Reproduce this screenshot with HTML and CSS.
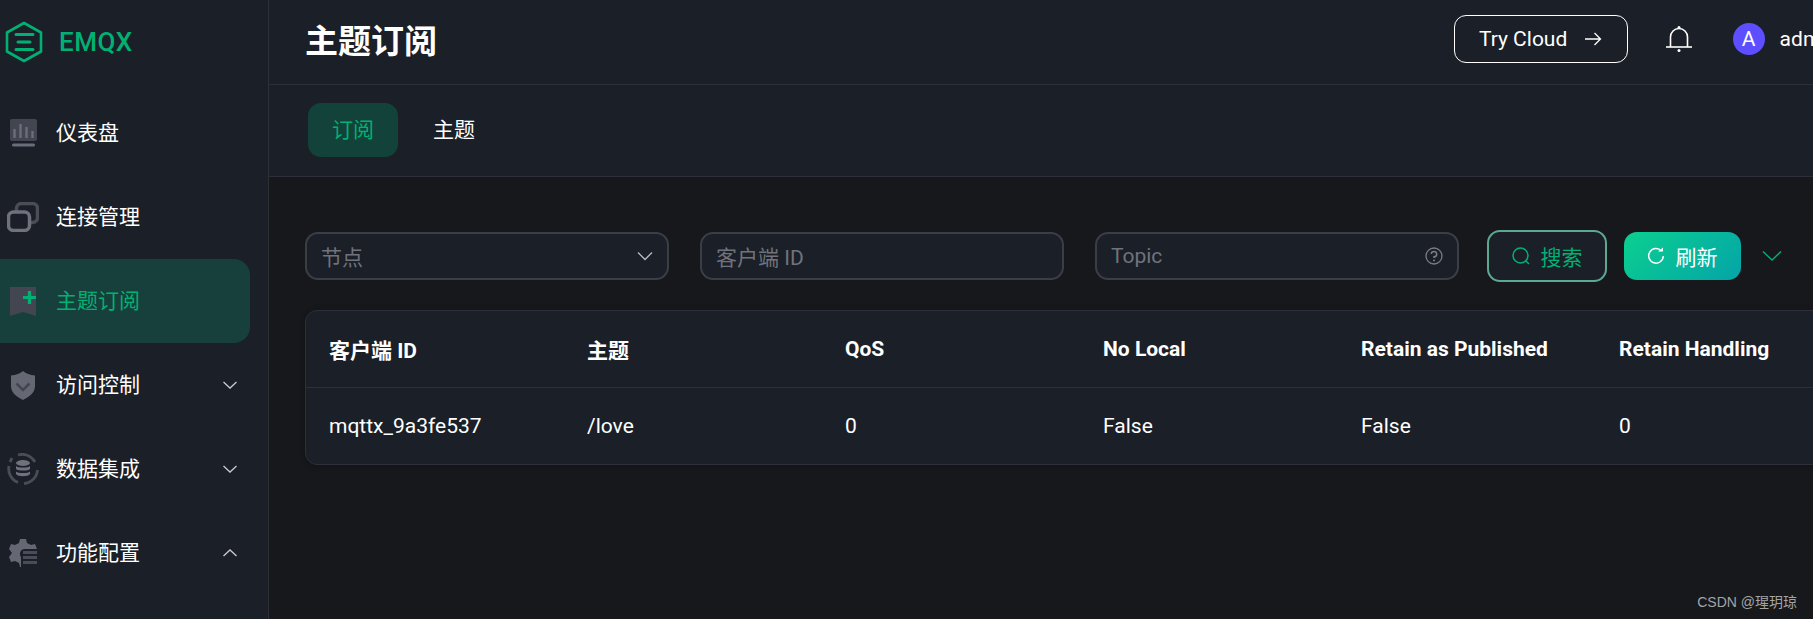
FILE: index.html
```html
<!DOCTYPE html>
<html lang="zh-CN">
<head>
    <meta charset="UTF-8">
    <title>EMQX 主题订阅</title>
    <link rel="stylesheet" href="styles.css">
</head>
<body>
    <!-- 侧边栏 -->
    <aside class="sidebar">
        <div class="logo">
            <svg class="logo-mark" viewBox="0 0 38 42" width="38" height="42">
                <path d="M19 2 L36 11.5 V30.5 L19 40 L2 30.5 V11.5 Z" fill="none" stroke="#00b173" stroke-width="2.6" stroke-linejoin="round"/>
                <path d="M11 13.5 H28 M13 21 H25 M11 28.5 H28" fill="none" stroke="#00b173" stroke-width="3" stroke-linecap="round"/>
            </svg>
            <span class="logo-text">EMQX</span>
        </div>
        <nav class="menu">
            <div class="menu-item">
                <span class="icon-box">
                    <svg viewBox="0 0 27 28" width="27" height="28">
                        <rect x="0" y="0" width="27" height="22" rx="2" fill="#434651"/>
                        <path d="M4.500 10 V19 M10.500 5 V19 M16.500 8 V19 M22.500 12 V19" stroke="#6b6e78" stroke-width="2.400" fill="none"/>
                        <rect x="2" y="24.500" width="23" height="3" rx="1.500" fill="#6b6e78"/>
                    </svg>
                </span>
                <span class="menu-label">仪表盘</span>
            </div>
            <div class="menu-item">
                <span class="icon-box">
                    <svg viewBox="0 0 32 30" width="32" height="30">
                        <rect x="9.500" y="1.500" width="21" height="19" rx="5" fill="none" stroke="#4a4d58" stroke-width="3.500"/>
                        <rect x="1.500" y="10" width="21" height="18.500" rx="5" fill="#1b1f28" stroke="#6f727c" stroke-width="3.500"/>
                    </svg>
                </span>
                <span class="menu-label">连接管理</span>
            </div>
            <div class="menu-item active">
                <span class="icon-box">
                    <svg viewBox="0 0 26 29" width="26" height="29">
                        <path d="M0 0 H26 V29 L13 25 L0 29 Z" fill="#434651"/>
                        <path d="M19.500 4 V17 M13 10.500 H26" stroke="#00b173" stroke-width="3.200" fill="none"/>
                    </svg>
                </span>
                <span class="menu-label">主题订阅</span>
            </div>
            <div class="menu-item">
                <span class="icon-box">
                    <svg viewBox="0 0 24 29" width="24" height="29">
                        <path d="M12 0 C15 2.500 19 4 24 4.500 V15 C24 22 18 26 12 29 C6 26 0 22 0 15 V4.500 C5 4 9 2.500 12 0 Z" fill="#656873"/>
                        <path d="M5.500 12.500 L12 19 L18.500 12.500" stroke="#434651" stroke-width="2.600" fill="none"/>
                    </svg>
                </span>
                <span class="menu-label">访问控制</span>
                <svg class="menu-arrow" viewBox="0 0 16 10" width="16" height="10"><path d="M1.500 2 L8 8 L14.500 2" fill="none" stroke="#c9cad0" stroke-width="1.300"/></svg>
            </div>
            <div class="menu-item">
                <span class="icon-box">
                    <svg viewBox="0 0 32 32" width="32" height="32">
                        <path d="M11 2 A14.500 14.500 0 0 1 28 9 M30.500 17 A14.500 14.500 0 0 1 17 30.500 M11 29.500 A14.500 14.500 0 0 1 2 13 M3 9 L5 5" fill="none" stroke="#4a4d58" stroke-width="2.800"/>
                        <ellipse cx="16" cy="10" rx="7" ry="3" fill="#6f727c"/>
                        <path d="M9 13 C11 15 21 15 23 13 V16 C21 18 11 18 9 16 Z M9 18.500 C11 20.500 21 20.500 23 18.500 V21 C21 24 11 24 9 21 Z" fill="#6f727c"/>
                    </svg>
                </span>
                <span class="menu-label">数据集成</span>
                <svg class="menu-arrow" viewBox="0 0 16 10" width="16" height="10"><path d="M1.500 2 L8 8 L14.500 2" fill="none" stroke="#c9cad0" stroke-width="1.300"/></svg>
            </div>
            <div class="menu-item">
                <span class="icon-box">
                    <svg viewBox="0 0 28 28" width="28" height="28">
                        <path d="M11 0 H17 L18 4 L22 6 L26 5 L28 10 H15 A5 5 0 0 0 12 18 V28 H11 L10 24 L6 22 L2 23 L0 18 L3 14 L0 10 L2 5 L6 6 L10 4 Z" fill="#656873"/>
                        <path d="M14 13.500 H28 M14 18.500 H28 M14 23.500 H28" stroke="#4a4d58" stroke-width="3" fill="none"/>
                    </svg>
                </span>
                <span class="menu-label">功能配置</span>
                <svg class="menu-arrow" viewBox="0 0 16 10" width="16" height="10"><path d="M1.500 8 L8 2 L14.500 8" fill="none" stroke="#c9cad0" stroke-width="1.300"/></svg>
            </div>
        </nav>
    </aside>

    <div class="main">
        <header class="topbar">
            <h1 class="page-title">主题订阅</h1>
            <div class="topbar-right">
                <button class="cloud-btn">Try Cloud
                    <svg viewBox="0 0 18 14" width="18" height="14"><path d="M1 7 H16 M10.500 1 L16.500 7 L10.500 13" fill="none" stroke="#fff" stroke-width="1.300"/></svg>
                </button>
                <svg class="bell" viewBox="0 0 28 28" width="28" height="28">
                    <path d="M5.500 22 V12 A8.500 8.500 0 0 1 22.500 12 V22" fill="none" stroke="#fff" stroke-width="1.600"/>
                    <path d="M1 22 H27" stroke="#fff" stroke-width="1.600"/>
                    <circle cx="14" cy="2.500" r="1.500" fill="#fff"/>
                    <circle cx="14" cy="25.500" r="1.500" fill="#fff"/>
                </svg>
                <span class="avatar">A</span>
                <span class="username">admin</span>
            </div>
        </header>

        <div class="tabs">
            <div class="tab active">订阅</div>
            <div class="tab">主题</div>
        </div>

        <section class="content">
            <div class="filters">
                <div class="field">
                    <span class="placeholder">节点</span>
                    <svg viewBox="0 0 16 10" width="16" height="10"><path d="M1 1.500 L8 8.500 L15 1.500" fill="none" stroke="#b9bbc1" stroke-width="1.300"/></svg>
                </div>
                <div class="field">
                    <span class="placeholder">客户端 ID</span>
                </div>
                <div class="field">
                    <span class="placeholder">Topic</span>
                    <svg viewBox="0 0 18 18" width="18" height="18">
                        <circle cx="9" cy="9" r="8" fill="none" stroke="#7b7d85" stroke-width="1.300"/>
                        <path d="M6.300 7 A2.700 2.700 0 1 1 9 9.800 V11" fill="none" stroke="#7b7d85" stroke-width="1.500"/>
                        <circle cx="9" cy="13.500" r="1" fill="#7b7d85"/>
                    </svg>
                </div>
                <div class="actions">
                    <button class="btn-search">
                        <svg viewBox="0 0 20 20" width="20" height="20">
                            <circle cx="9.500" cy="9.500" r="7.500" fill="none" stroke="#00b173" stroke-width="1.500"/>
                            <path d="M15 15 L18 18" stroke="#00b173" stroke-width="1.500"/>
                        </svg>
                        搜索
                    </button>
                    <button class="btn-refresh">
                        <svg viewBox="0 0 18 18" width="18" height="18">
                            <path d="M14.500 4 A7.300 7.300 0 1 0 16.300 9" fill="none" stroke="#fff" stroke-width="1.500"/>
                            <path d="M11 4.500 H16 V0.500 Z" fill="#fff"/>
                        </svg>
                        刷新
                    </button>
                    <svg class="more" viewBox="0 0 20 12" width="20" height="12"><path d="M1 1.500 L10 10 L19 1.500" fill="none" stroke="#00b173" stroke-width="1.400"/></svg>
                </div>
            </div>

            <div class="table">
                <div class="table-row table-head">
                    <div>客户端 ID</div>
                    <div>主题</div>
                    <div>QoS</div>
                    <div>No Local</div>
                    <div>Retain as Published</div>
                    <div>Retain Handling</div>
                </div>
                <div class="table-row">
                    <div>mqttx_9a3fe537</div>
                    <div>/love</div>
                    <div>0</div>
                    <div>False</div>
                    <div>False</div>
                    <div>0</div>
                </div>
            </div>
        </section>
    </div>

    <div class="watermark">CSDN @瑆玥琼</div>
</body>
</html>
```

FILE: styles.css
```css
html, body {
    height: 100%;
}
body {
    margin: 0;
    width: 1813px;
    height: 619px;
    display: flex;
    overflow: hidden;
    position: relative;
    background-color: #17181c;
    color: #fff;
    font-family: Roboto, "Noto Sans CJK SC", sans-serif;
    font-size: 21px;
}
button {
    font-family: inherit;
    font-size: 21px;
    cursor: pointer;
}

/* sidebar */
.sidebar {
    width: 268px;
    flex-shrink: 0;
    background-color: #1b1f28;
    border-right: 1px solid #2d3038;
}
.logo {
    height: 84px;
    display: flex;
    align-items: center;
    padding-left: 5px;
    gap: 16px;
}
.logo-text {
    color: #00b173;
    font-size: 26px;
    font-weight: 500;
    letter-spacing: 0.5px;
}
.menu {
    padding-top: 7px;
}
.menu-item {
    width: 250px;
    height: 84px;
    display: flex;
    align-items: center;
    box-sizing: border-box;
    padding-right: 12px;
}
.menu-item.active {
    background-color: #173f3b;
    color: #00b173;
    border-radius: 0 16px 16px 0;
}
.icon-box {
    width: 46px;
    margin-right: 10px;
    flex-shrink: 0;
    display: flex;
    justify-content: center;
}
.menu-label {
    flex: 1;
    padding-bottom: 4px;
}
.menu-arrow {
    flex-shrink: 0;
}

/* main */
.main {
    width: 1640px;
    flex-shrink: 0;
}
.topbar {
    height: 85px;
    box-sizing: border-box;
    background-color: #1b1f28;
    border-bottom: 1px solid #2d3038;
    display: flex;
    align-items: center;
    justify-content: space-between;
    padding: 0 71px 6px 36px;
}
.page-title {
    margin: 0;
    font-size: 33px;
    font-weight: 700;
}
.topbar-right {
    display: flex;
    align-items: center;
}
.cloud-btn {
    width: 174px;
    height: 48px;
    display: flex;
    align-items: center;
    justify-content: center;
    gap: 17px;
    background: transparent;
    border: 1px solid #fff;
    border-radius: 12px;
    color: #fff;
}
.bell {
    margin-left: 37px;
    margin-right: 40px;
}
.avatar {
    width: 32px;
    height: 32px;
    border-radius: 50%;
    background-color: #5d4eff;
    display: flex;
    align-items: center;
    justify-content: center;
}
.username {
    margin-left: 15px;
}

.tabs {
    height: 92px;
    box-sizing: border-box;
    background-color: #1b1f28;
    border-bottom: 1px solid #2d3038;
    display: flex;
    align-items: center;
    padding: 0 0 2px 39px;
    gap: 11px;
}
.tab {
    width: 90px;
    height: 54px;
    box-sizing: border-box;
    padding-bottom: 4px;
    display: flex;
    align-items: center;
    justify-content: center;
    border-radius: 13px;
}
.tab.active {
    background-color: #12423a;
    color: #00b173;
}

/* filters */
.content {
    padding: 55px 0 0 36px;
}
.filters {
    display: flex;
    align-items: center;
    gap: 30.6px;
    height: 48px;
}
.field {
    width: 364.4px;
    height: 48px;
    box-sizing: border-box;
    background-color: #1b1f28;
    border: 2px solid #3b3e47;
    border-radius: 13px;
    padding: 0 14px 0 14px;
    display: flex;
    align-items: center;
    justify-content: space-between;
}
.placeholder {
    color: #70737b;
}
.actions {
    display: flex;
    align-items: center;
    margin-left: -3px;
}
.btn-search {
    width: 120px;
    height: 52px;
    background-color: #1b1f28;
    border: 2px solid #5ca893;
    border-radius: 13px;
    color: #00b173;
    display: flex;
    align-items: center;
    justify-content: center;
    gap: 9px;
}
.btn-refresh {
    width: 117px;
    height: 48px;
    margin-left: 17px;
    border: none;
    border-radius: 13px;
    background: linear-gradient(135deg, #0bd08f, #04a4a8);
    color: #fff;
    display: flex;
    align-items: center;
    justify-content: center;
    gap: 10px;
}
.more {
    margin-left: 21px;
}

/* table */
.table {
    margin-top: 30px;
    width: 1600px;
    background-color: #1b1f28;
    border: 1px solid #2d3038;
    border-radius: 12px;
    box-shadow: 0 1px 6px rgba(0, 0, 0, 0.25);
}
.table-row {
    height: 76px;
    display: grid;
    grid-template-columns: repeat(6, 258px);
    align-items: center;
    padding-left: 23px;
}
.table-head {
    font-weight: 700;
    border-bottom: 1px solid #2d3038;
}

.watermark {
    position: absolute;
    right: 16px;
    bottom: 8px;
    font-family: "Liberation Sans", "Noto Sans CJK SC", sans-serif;
    font-size: 14px;
    color: #a3a4a7;
}
```
